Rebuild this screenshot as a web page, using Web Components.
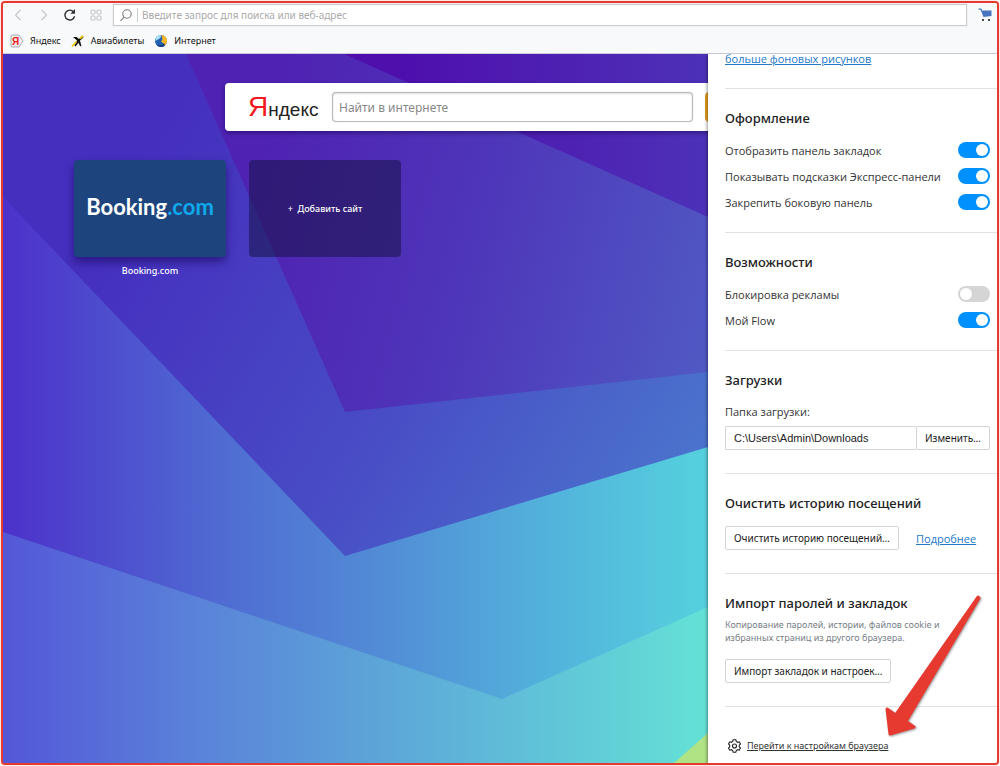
<!DOCTYPE html>
<html lang="ru">
<head>
<meta charset="utf-8">
<title>Экспресс-панель</title>
<style>
html, body { margin: 0; }
body { font-family: "Open Sans", "Noto Sans", sans-serif; font-size: 12px; color: #222; background: #fff; }
</style>
</head>
<body>
<browser-window></browser-window>
<script>
const define = (name, html, setup) => {
  const template = document.createElement('template');
  template.innerHTML = html;
  customElements.define(name, class extends HTMLElement {
    constructor() {
      super();
      this.attachShadow({ mode: 'open' }).append(template.content.cloneNode(true));
    }
    connectedCallback() { if (setup) setup(this, this.shadowRoot); }
  });
};

define('nav-bar', `
<style>
:host { display: flex; align-items: center; height: 24px; padding-left: 2px; }
button { border: 0; background: none; padding: 0; margin: 0; width: 26px; height: 24px; display: grid; place-items: center; }
svg { display: block; fill: none; stroke: #c4c7ca; stroke-width: 1.1; }
.dark { stroke: #333; stroke-width: 1.4; }
form { flex: 1; display: flex; align-items: center; height: 22px; box-sizing: border-box; border: 1px solid #ccc; background: #fff; margin-left: 4px; padding-left: 5px; box-shadow: 0 0 1px #ccc; }
form svg { stroke: #777; }
i { width: 1px; height: 14px; background: #ccc; margin: 0 4px; }
input { flex: 1; min-width: 0; border: 0; padding: 0; outline: 0; background: none; font: 10px/18px "Noto Sans", sans-serif; }
input::placeholder { color: #aaa; opacity: 1; }
.cart { margin-left: 6px; width: 24px; }
.cart svg { stroke: none; }
</style>
<button aria-label="Назад"><svg width="16" height="14"><path d="M10.500 2 5.500 7l5 5"/></svg></button>
<button aria-label="Вперёд"><svg width="16" height="14"><path d="m5.500 2 5 5-5 5"/></svg></button>
<button aria-label="Обновить"><svg class="dark" width="14" height="14"><path d="M11.6 8.3A4.9 4.9 0 1 1 10.7 4"/><path d="M12 1v4.8H7.4z" fill="#333" stroke="none"/></svg></button>
<button aria-label="Экспресс-панель"><svg width="14" height="14"><rect x="2" y="2" width="4" height="4" rx="1"/><rect x="8" y="2" width="4" height="4" rx="1"/><rect x="2" y="8" width="4" height="4" rx="1"/><rect x="8" y="8" width="4" height="4" rx="1"/></svg></button>
<form>
  <svg width="14" height="14"><circle cx="8" cy="6" r="4.2"/><path d="M5 9.2 1.5 12.8"/></svg><i></i>
  <input aria-label="Адрес" placeholder="Введите запрос для поиска или веб-адрес">
</form>
<button class="cart" aria-label="Покупки"><svg width="16" height="16"><path d="M1.500 1.500h2.800l.8 2H14.500v5.6L6.500 10 3.500 2.800H1.500z" fill="#4a74bd"/><circle cx="6" cy="13" r="1.1" fill="#222"/><circle cx="12" cy="13" r="1.1" fill="#222"/></svg></button>
`);

define('book-mark', `
<style>
:host { display: block; }
a { display: flex; align-items: center; gap: 6px; color: #111; text-decoration: none; font: 9px/16px "Noto Sans", sans-serif; }
</style>
<a href="#"><slot name="icon"></slot><slot></slot></a>
`);

define('bookmarks-bar', `
<style>
:host { display: flex; align-items: center; gap: 10px; height: 26px; box-sizing: border-box; padding: 2px 0 0 7px; }
svg { display: block; }
</style>
<book-mark><svg slot="icon" width="14" height="14"><path d="M2 1h7l4 6-4 6H2a1 1 0 0 1-1-1V2a1 1 0 0 1 1-1z" fill="#eee" stroke="#aaa"/><text x="2" y="11" font-family="Liberation Sans" font-weight="700" font-size="10" fill="#e22">Я</text></svg>Яндекс</book-mark>
<book-mark><svg slot="icon" width="14" height="14"><path d="M2 3h3.500l2.500 2 3-3 1.500.5-.5 1.500-3 2.500 1.500 6-1.500-.5L7 8 4.500 10 6 6.500z" fill="#111"/><path d="M1 12.500 5.500 7.500M9 4.500l3-2.500" stroke="#f0cb12" stroke-width="1.800"/><path d="M4 12 7 8" stroke="#111" stroke-width="1.400"/></svg>Авиабилеты</book-mark>
<book-mark><svg slot="icon" width="14" height="14"><circle cx="7" cy="7" r="6" fill="#1f5fae"/><path d="M2 3.500c1-2 3.500-2.500 5-2.300L6.500 4 4 5.500 1.500 7z" fill="#a5e0f7"/><path d="M7 1c4 0 6.500 3 6 6.500-.4 2-1.500 3.500-3 4.500C10.500 9.500 9 9 7 7.500 9 6 8.500 3 7 1z" fill="#f7b52a"/><path d="M2 10c3 2.500 7 1.500 8-1l1 2.500C8 14 4 13.500 2 10z" fill="#123f7e"/></svg>Интернет</book-mark>
`);

define('wall-paper', `
<style>:host, svg { display: block; width: 100%; height: 100%; }</style>
<svg viewBox="3 54 705 709" preserveAspectRatio="none" aria-hidden="true">
<defs>
<linearGradient id="a" gradientUnits="userSpaceOnUse" x1="150" y1="150" x2="708" y2="480"><stop stop-color="#452fbf"/><stop offset=".5" stop-color="#484bc5"/><stop offset="1" stop-color="#4b76cd"/></linearGradient>
<linearGradient id="b" gradientUnits="userSpaceOnUse" x1="250" y1="200" x2="720" y2="320"><stop stop-color="#4f22b3"/><stop offset=".45" stop-color="#4e35b9"/><stop offset="1" stop-color="#5059c4"/></linearGradient>
<linearGradient id="c" gradientUnits="userSpaceOnUse" x1="400" y1="0" x2="708" y2="0"><stop stop-color="#4e0fad"/><stop offset="1" stop-color="#4d31b8"/></linearGradient>
<linearGradient id="d" gradientUnits="userSpaceOnUse" x1="3" y1="0" x2="708" y2="0"><stop stop-color="#4c31ca"/><stop offset=".3" stop-color="#4f6ad2"/><stop offset=".53" stop-color="#528bd6"/><stop offset=".75" stop-color="#52afdb"/><stop offset="1" stop-color="#55d1de"/></linearGradient>
<linearGradient id="e" gradientUnits="userSpaceOnUse" x1="3" y1="0" x2="708" y2="0"><stop stop-color="#5457d8"/><stop offset=".28" stop-color="#5a83d9"/><stop offset=".5" stop-color="#5ca1d8"/><stop offset=".75" stop-color="#60c1d8"/><stop offset="1" stop-color="#64e1d6"/></linearGradient>
</defs>
<path fill="url(#a)" d="M3 54h705v709H3z"/>
<path fill="url(#b)" d="M186 54h522v318L345 412z"/>
<path fill="url(#c)" d="M344 54h364v163z"/>
<path fill="url(#d)" d="M3 197l342 359 363-109v316H3z"/>
<path fill="url(#e)" d="M3 532l499 167 206-92v156H3z"/>
<path fill="#afe384" d="M674 763l34-30v30z"/>
</svg>`);

define('web-search', `
<style>
:host { display: flex; align-items: center; height: 48px; box-sizing: border-box; background: #fff; border-radius: 4px; padding-left: 23px; box-shadow: 0 2px 4px rgba(20,0,70,.5); }
.logo { flex: none; width: 84px; font: 19px/40px "Liberation Sans", sans-serif; color: #222; white-space: nowrap; padding-top: 3px; box-sizing: border-box; }
.logo b { font-weight: 400; font-size: 28px; color: #f21822; }
input { flex: 1; min-width: 0; height: 30px; box-sizing: border-box; border: 1px solid #bbb; border-radius: 4px; padding: 0 6px; font: 12px/26px "Noto Sans", sans-serif; box-shadow: inset 0 1px 2px #ddd, 0 0 1px #bbb; }
input::placeholder { color: #888; opacity: 1; }
button { width: 90px; height: 30px; box-sizing: border-box; margin: 0 13px 0 12px; border: 1px solid #dd9a20; border-radius: 4px; background: #eaa41f; }
</style>
<span class="logo"><b>Я</b>ндекс</span>
<input aria-label="Поиск" placeholder="Найти в интернете"><button aria-label="Искать"></button>
`);

define('dial-tile', `
<style>
:host { display: block; width: 152px; color: #fff; text-align: center; font: 500 9px/16px "Noto Sans", sans-serif; }
a { display: block; color: inherit; text-decoration: none; }
.face { height: 97px; box-sizing: border-box; display: grid; place-items: center; border-radius: 4px; background: rgba(24,20,70,.55); }
:host([brand]) .face { background: #1d447c; padding-bottom: 4px; box-shadow: 0 5px 10px rgba(20,0,80,.55); font: 700 22px/28px Lato, sans-serif; }
.name { display: block; padding-top: 6px; }
</style>
<a href="#"><span class="face"><span><slot></slot></span></span><span class="name"><slot name="name"></slot></span></a>
`);

define('speed-dial', `
<style>
:host { display: block; position: relative; overflow: hidden; }
wall-paper { position: absolute; inset: 0; }
.content { position: relative; padding-top: 29px; }
web-search { margin: 0 -100px 0 222px; }
.tiles { display: flex; gap: 23px; margin: 29px 0 0 71px; }
em { font-style: normal; color: #0fa8ec; }
</style>
<wall-paper></wall-paper>
<div class="content">
<web-search></web-search>
<div class="tiles">
<dial-tile brand>Booking<em>.com</em><span slot="name">Booking.com</span></dial-tile>
<dial-tile>+&nbsp; Добавить сайт</dial-tile>
</div>
</div>
`);

define('setting-section', `
<style>
:host { display: block; border-top: 1px solid #e2e2e2; padding: 17px 7px 23px 0; }
:host([rows]) { padding-bottom: 17px; }
h2 { margin: 0; font: 500 13px/24px "Noto Sans", sans-serif; color: #222; }
</style>
<h2></h2><slot></slot>
`, (el, root) => { root.querySelector('h2').textContent = el.getAttribute('heading'); });

define('toggle-row', `
<style>
:host { display: block; }
label { display: flex; align-items: center; justify-content: space-between; height: 26px; font-size: 11px; color: #333; }
input { appearance: none; flex: none; width: 32px; height: 16px; margin: 0; border-radius: 8px; background: #d5d5d5; display: flex; align-items: center; padding: 0 2px; }
input::before { content: ""; width: 12px; height: 12px; border-radius: 50%; background: #fff; }
input:checked { background: #0091ff; justify-content: flex-end; }
</style>
<label><slot></slot><input type="checkbox"></label>
`, (el, root) => { root.querySelector('input').checked = el.hasAttribute('on'); });

define('push-button', `
<style>
:host { display: inline-block; }
button { display: block; height: 24px; box-sizing: border-box; border: 1px solid #d4d4d4; border-radius: 2px; background: #fff; padding: 0 8px; color: #222; font: 10px/20px "Noto Sans", sans-serif; white-space: nowrap; }
</style>
<button><slot></slot></button>
`);

define('settings-panel', `
<style>
:host { display: block; background: #fff; padding-left: 17px; position: relative; box-shadow: -1px 2px 3px rgba(0,0,0,.4); }
a { color: #2478c8; }
.more { display: block; font-size: 11px; line-height: 10px; padding-bottom: 24px; }
.first { margin-top: 7px; }
.label { display: block; font-size: 11px; line-height: 26px; height: 27px; margin-top: 7px; color: #333; }
.path { display: flex; }
.path input { flex: 1; min-width: 0; height: 24px; box-sizing: border-box; border: 1px solid #d4d4d4; border-right: 0; border-radius: 2px 0 0 2px; padding: 0 8px; color: #222; font: 11px/20px "Liberation Sans", sans-serif; }
.clear { display: flex; align-items: center; gap: 17px; margin-top: 11px; font-size: 11px; }
.import { display: block; width: fit-content; }
p { margin: 3px 0 15px; font: 9px/13px "Noto Sans", sans-serif; color: #788086; }
footer { border-top: 1px solid #e2e2e2; padding: 27px 0 5px 3px; }
footer a { display: flex; align-items: center; gap: 6px; height: 24px; color: #333; font: 9px/16px "Noto Sans", sans-serif; }
svg { display: block; fill: none; stroke: #222; stroke-width: 1.1; }
</style>
<a class="more" href="#">больше фоновых рисунков</a>
<setting-section rows heading="Оформление"><div class="first">
<toggle-row on>Отобразить панель закладок</toggle-row>
<toggle-row on>Показывать подсказки Экспресс-панели</toggle-row>
<toggle-row on>Закрепить боковую панель</toggle-row></div>
</setting-section>
<setting-section rows heading="Возможности"><div class="first">
<toggle-row>Блокировка рекламы</toggle-row>
<toggle-row on>Мой Flow</toggle-row></div>
</setting-section>
<setting-section heading="Загрузки">
<label class="label" for="folder">Папка загрузки:</label>
<div class="path"><input id="folder" value="C:\\Users\\Admin\\Downloads" readonly><push-button>Изменить…</push-button></div>
</setting-section>
<setting-section heading="Очистить историю посещений">
<div class="clear"><push-button>Очистить историю посещений…</push-button><a href="#">Подробнее</a></div>
</setting-section>
<setting-section heading="Импорт паролей и закладок">
<p>Копирование паролей, истории, файлов cookie и<br>избранных страниц из другого браузера.</p>
<push-button class="import">Импорт закладок и настроек…</push-button>
</setting-section>
<footer><a href="#"><svg width="13" height="14" viewBox="0 0 13 14"><path d="M5.200.8h2.600l.5 1.700 1.300.8 1.700-.5 1.200 2.200-1.200 1.200v1.600l1.200 1.200-1.200 2.200-1.700-.5-1.300.8-.5 1.700H5.200l-.5-1.700-1.300-.8-1.700.5L.5 9l1.200-1.200V6.200L.5 5l1.200-2.200 1.700.5 1.300-.8z"/><circle cx="6.500" cy="7" r="2"/></svg><span>Перейти к настройкам браузера</span></a></footer>
`);

define('browser-window', `
<style>
:host { display: grid; grid-template-rows: auto 1fr; position: relative; box-sizing: border-box; min-height: calc(100vh - 2px); margin: 1px; border: 2px solid #e63a30; border-radius: 4px; box-shadow: 0 0 1px #e63a30; overflow: hidden; }
header { background: #f7f9fb; border-bottom: 1px solid #ccd; }
main { display: grid; grid-template-columns: minmax(0, 1fr) 289px; }
.arrow { position: absolute; right: 0; bottom: 19px; width: 120px; height: 156px; pointer-events: none; filter: drop-shadow(1px 1px 1px rgba(0,0,0,.4)); }
</style>
<header><nav-bar></nav-bar><bookmarks-bar></bookmarks-bar></header>
<main><speed-dial></speed-dial><settings-panel></settings-panel></main>
<svg class="arrow" viewBox="877 588 120 156" aria-hidden="true"><path d="M978 597 895.500 715 887 709l3 25 24-7L906 721.500 979 598z" fill="#e63a30" stroke="#e63a30" stroke-width="3" stroke-linejoin="round"/></svg>
`);
</script>
</body>
</html>
